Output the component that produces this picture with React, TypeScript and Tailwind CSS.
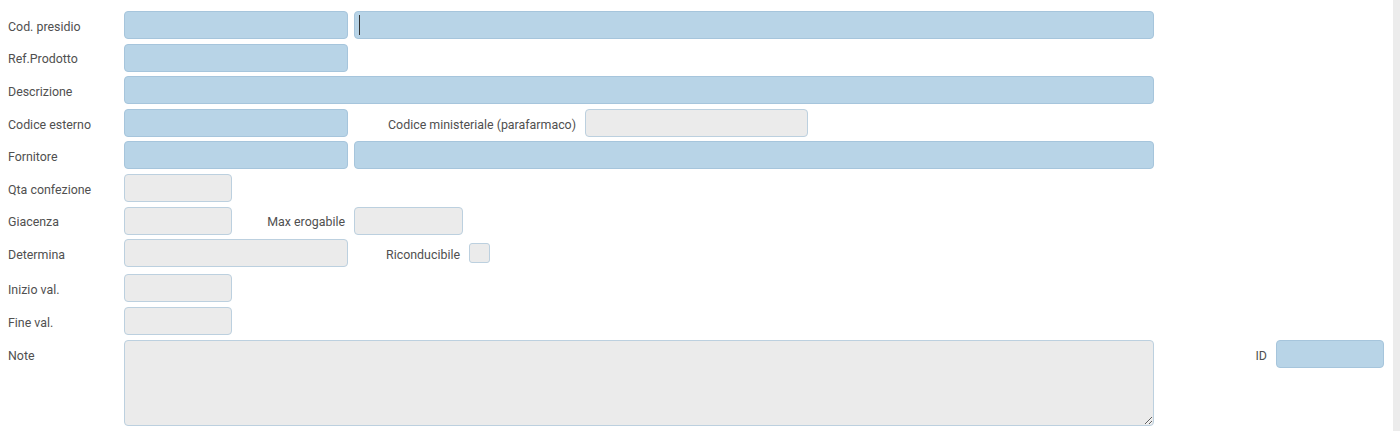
import React from 'react';

const blue = 'h-[28px] rounded-[4px] border border-[#a6c5dc] bg-[#b8d4e7] outline-none';
const gray = 'h-[28px] rounded-[4px] border border-[#bcd0df] bg-[#ebebeb] outline-none';

const Label: React.FC<{ children: React.ReactNode }> = ({ children }) => (
  <div className="w-[124px] shrink-0 pl-2 pt-[4px] text-[#505050]">{children}</div>
);

const Row: React.FC<{ label: string; className?: string; children?: React.ReactNode }> = ({ label, className, children }) => (
  <div className={`flex items-center ${className ?? ''}`}>
    <Label>{label}</Label>
    {children}
  </div>
);

const Side: React.FC<{ w: string; children: React.ReactNode }> = ({ w, children }) => (
  <div className={`${w} shrink-0 pr-[9px] pt-[4px] text-right text-[#505050]`}>{children}</div>
);

export default function App() {
  return (
    <div
      className="flex h-[431px] w-full bg-white text-[12.4px] leading-none"
      style={{ fontFamily: 'Roboto, "Open Sans", sans-serif' }}
    >
      <div className="flex flex-1 flex-col gap-[4.6px] pt-[11px]">
        <Row label="Cod. presidio">
          <input className={`${blue} w-[224px]`} />
          <div className={`${blue} ml-[6px] flex w-[800px] items-center pl-[4px]`}>
            <span className="h-[20px] w-px bg-[#333]" />
          </div>
        </Row>
        <Row label="Ref.Prodotto">
          <input className={`${blue} w-[224px]`} />
        </Row>
        <Row label="Descrizione">
          <input className={`${blue} w-[1030px]`} />
        </Row>
        <Row label="Codice esterno">
          <input className={`${blue} w-[224px]`} />
          <Side w="w-[237px]">Codice ministeriale (parafarmaco)</Side>
          <input className={`${gray} w-[223px]`} />
        </Row>
        <Row label="Fornitore">
          <input className={`${blue} w-[224px]`} />
          <input className={`${blue} ml-[6px] w-[800px]`} />
        </Row>
        <Row label="Qta confezione">
          <input className={`${gray} w-[108px]`} />
        </Row>
        <Row label="Giacenza">
          <input className={`${gray} w-[108px]`} />
          <Side w="w-[122px]">Max erogabile</Side>
          <input className={`${gray} w-[109px]`} />
        </Row>
        <Row label="Determina" className="mb-[2.4px]">
          <input className={`${gray} w-[224px]`} />
          <Side w="w-[121px]">Riconducibile</Side>
          <div className="h-[20px] w-[21px] rounded-[3px] border border-[#bcd0df] bg-[#ebebeb]" />
        </Row>
        <Row label="Inizio val.">
          <input className={`${gray} w-[108px]`} />
        </Row>
        <Row label="Fine val.">
          <input className={`${gray} w-[108px]`} />
        </Row>
        <div className="mt-[0.6px] flex items-start">
          <div className="flex h-[28px] items-center">
            <Label>Note</Label>
          </div>
          <textarea className="h-[86px] w-[1030px] rounded-[4px] border border-[#bcd0df] bg-[#ebebeb] outline-none" />
          <div className="flex h-[28px] w-[122px] shrink-0 items-center justify-end pr-[9px] pt-[4px] text-[#505050]">ID</div>
          <input className={`${blue} w-[108px]`} />
        </div>
      </div>
      <div className="w-[7px] shrink-0 bg-[#ececec]" />
    </div>
  );
}
